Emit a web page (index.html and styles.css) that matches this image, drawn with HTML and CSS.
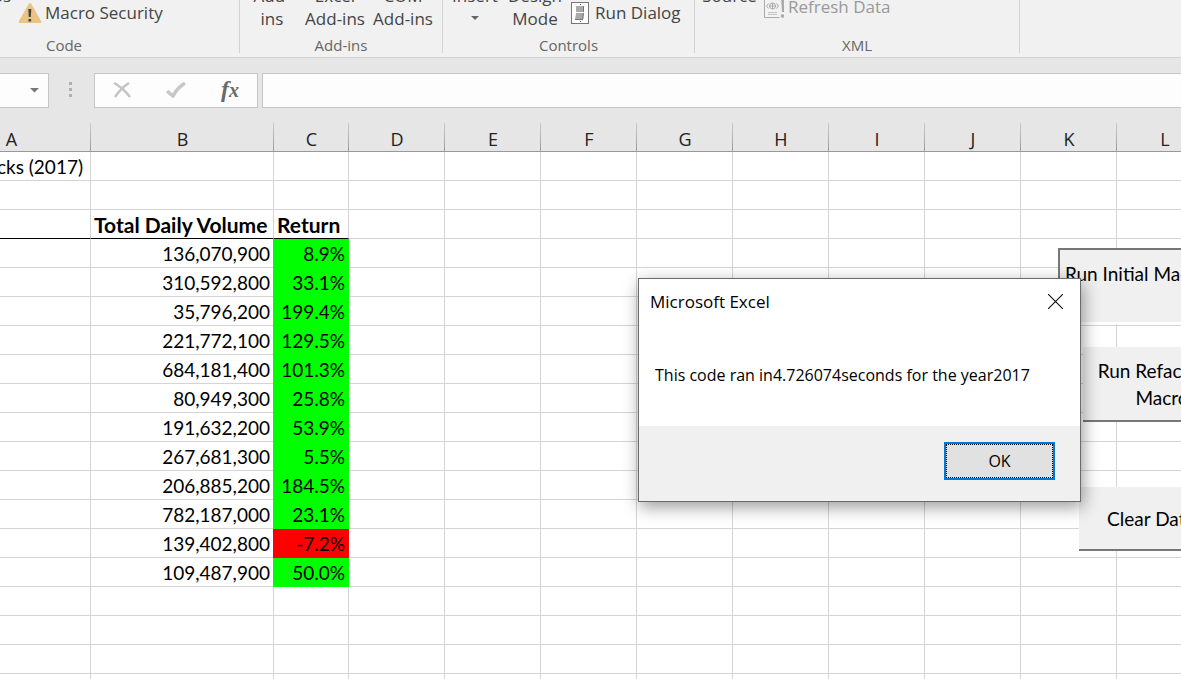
FILE: index.html
```html
<!DOCTYPE html>
<html lang="en">
<head>
<meta charset="utf-8">
<title>Microsoft Excel</title>
<link rel="stylesheet" href="styles.css">
</head>
<body>
<div class="app">
  <div class="ribbon">
    <section class="group group-code">
      <div class="tools">
        <button class="big macros"><span>Macros</span><span class="blank"></span></button>
        <button class="small security">
          <svg width="24" height="22" viewBox="0 0 24 22"><path d="M12 1Q13 1 14 3L23 19Q24 21 22 21H2Q0 21 1 19L10 3Q11 1 12 1Z" fill="#ebc383"/><path d="M10.3 7h3l-.5 8h-2zM10.5 17h2.6v2.4h-2.6z" fill="#444"/></svg>
          <span>Macro Security</span>
        </button>
      </div>
      <div class="caption">Code</div>
    </section>
    <section class="group group-addins">
      <div class="tools">
        <button class="big w-addins"><span>Add-</span><span>ins</span></button>
        <button class="big w-excel"><span>Excel</span><span>Add-ins</span></button>
        <button class="big w-com"><span>COM</span><span>Add-ins</span></button>
      </div>
      <div class="caption">Add-ins</div>
    </section>
    <section class="group group-controls">
      <div class="tools">
        <button class="big w-insert"><span>Insert</span><span class="blank"><svg width="9" height="5" viewBox="0 0 9 5"><path d="M0 0h8L4 4z" fill="#666"/></svg></span></button>
        <button class="big w-design"><span>Design</span><span>Mode</span></button>
        <button class="small dialog-tool">
          <svg width="18" height="22" viewBox="0 0 18 22"><rect x=".5" y=".5" width="17" height="21" fill="#fff" stroke="#777"/><path d="M5 4h8v6H5zM5 11h8l-1 7H4z" fill="#aaa"/><path d="M12 4h1v6h-1zM12 11h1l-1 7h-1zM4 17h8v1H4z" fill="#777"/><path d="M9 2h1v1H9zM9 19h1v1H9z" fill="#555"/></svg>
          <span>Run Dialog</span>
        </button>
      </div>
      <div class="caption">Controls</div>
    </section>
    <section class="group group-xml">
      <div class="tools">
        <button class="big w-source"><span>Source</span><span class="blank"></span></button>
        <button class="small refresh" disabled>
          <svg width="20" height="22" viewBox="0 0 20 22"><path d="M.5 0V21.500H15.500" fill="#f5f3f5" stroke="#aaa"/><path d="M4.500 7.500L2.500 10l2 2.500M12.500 7.500L14.500 10l-2 2.500" fill="none" stroke="#aaa"/><circle cx="8.500" cy="10" r="3" fill="none" stroke="#aaa"/><path d="M5.500 10h6M8.500 7v6" stroke="#aaa"/><path d="M4 16.500h9M4 18.500h9" stroke="#c5bfc5"/><path d="M17 0h4l-1 16h-2z" fill="#aaa"/><circle cx="18.500" cy="20" r="1.800" fill="#aaa"/></svg>
          <span>Refresh Data</span>
        </button>
      </div>
      <div class="caption">XML</div>
    </section>
  </div>

  <div class="formula-bar">
    <button class="name-box" aria-label="Name box"><svg width="9" height="5" viewBox="0 0 9 5"><path d="M0 0h9L4.500 4.500z" fill="#777"/></svg></button>
    <span class="dots"><i></i><i></i><i></i></span>
    <div class="entry-tools">
      <button aria-label="Cancel"><svg width="18" height="16" viewBox="0 0 18 16"><path d="M1 1Q9 5 17 15M16 1Q8 6 2 15" fill="none" stroke="#c4c4c4" stroke-width="2.500"/></svg></button>
      <button aria-label="Enter"><svg width="20" height="16" viewBox="0 0 20 16"><path d="M1 9l6 5Q11 6 19 1" fill="none" stroke="#c8c8c8" stroke-width="3.500"/></svg></button>
      <button class="fx" aria-label="Insert function"><span>f</span><span class="x">x</span></button>
    </div>
    <input class="formula" type="text" aria-label="Formula">
  </div>

  <div class="sheet">
    <table class="grid">
      <colgroup><col class="col-a"><col class="col-b"><col class="col-c"><col class="col"><col class="col"><col class="col"><col class="col"><col class="col"><col class="col"><col class="col"><col class="col"><col></colgroup>
      <thead><tr><th class="head-a">A</th><th>B</th><th>C</th><th>D</th><th>E</th><th>F</th><th>G</th><th>H</th><th>I</th><th>J</th><th>K</th><th>L</th></tr></thead>
      <tbody>
        <tr><td class="title"><div>All Stocks (2017)</div></td><td></td><td></td><td></td><td></td><td></td><td></td><td></td><td></td><td></td><td></td><td></td></tr>
        <tr><td></td><td></td><td></td><td></td><td></td><td></td><td></td><td></td><td></td><td></td><td></td><td></td></tr>
        <tr class="labels"><td class="rule"></td><td class="rule">Total Daily Volume</td><td class="rule">Return</td><td></td><td></td><td></td><td></td><td></td><td></td><td></td><td></td><td></td></tr>
        <tr><td></td><td>136,070,900</td><td class="up">8.9%</td><td></td><td></td><td></td><td></td><td></td><td></td><td></td><td></td><td></td></tr>
        <tr><td></td><td>310,592,800</td><td class="up">33.1%</td><td></td><td></td><td></td><td></td><td></td><td></td><td></td><td></td><td></td></tr>
        <tr><td></td><td>35,796,200</td><td class="up">199.4%</td><td></td><td></td><td></td><td></td><td></td><td></td><td></td><td></td><td></td></tr>
        <tr><td></td><td>221,772,100</td><td class="up">129.5%</td><td></td><td></td><td></td><td></td><td></td><td></td><td></td><td></td><td></td></tr>
        <tr><td></td><td>684,181,400</td><td class="up">101.3%</td><td></td><td></td><td></td><td></td><td></td><td></td><td></td><td></td><td></td></tr>
        <tr><td></td><td>80,949,300</td><td class="up">25.8%</td><td></td><td></td><td></td><td></td><td></td><td></td><td></td><td></td><td></td></tr>
        <tr><td></td><td>191,632,200</td><td class="up">53.9%</td><td></td><td></td><td></td><td></td><td></td><td></td><td></td><td></td><td></td></tr>
        <tr><td></td><td>267,681,300</td><td class="up">5.5%</td><td></td><td></td><td></td><td></td><td></td><td></td><td></td><td></td><td></td></tr>
        <tr><td></td><td>206,885,200</td><td class="up">184.5%</td><td></td><td></td><td></td><td></td><td></td><td></td><td></td><td></td><td></td></tr>
        <tr><td></td><td>782,187,000</td><td class="up">23.1%</td><td></td><td></td><td></td><td></td><td></td><td></td><td></td><td></td><td></td></tr>
        <tr><td></td><td>139,402,800</td><td class="down">-7.2%</td><td></td><td></td><td></td><td></td><td></td><td></td><td></td><td></td><td></td></tr>
        <tr><td></td><td>109,487,900</td><td class="up">50.0%</td><td></td><td></td><td></td><td></td><td></td><td></td><td></td><td></td><td></td></tr>
        <tr><td></td><td></td><td></td><td></td><td></td><td></td><td></td><td></td><td></td><td></td><td></td><td></td></tr>
        <tr><td></td><td></td><td></td><td></td><td></td><td></td><td></td><td></td><td></td><td></td><td></td><td></td></tr>
        <tr><td></td><td></td><td></td><td></td><td></td><td></td><td></td><td></td><td></td><td></td><td></td><td></td></tr>
        <tr><td></td><td></td><td></td><td></td><td></td><td></td><td></td><td></td><td></td><td></td><td></td><td></td></tr>
      </tbody>
    </table>
    <button class="macro macro-initial">Run Initial Macro</button>
    <button class="macro macro-refactored">Run Refactored Macro</button>
    <button class="macro macro-clear">Clear Data</button>
  </div>

  <div class="msgbox" role="dialog" aria-labelledby="msg-title">
    <div class="msg-head">
      <span id="msg-title">Microsoft Excel</span>
      <button class="close" aria-label="Close"><svg width="15" height="15" viewBox="0 0 15 15"><path d="M0 0L15 15M15 0L0 15" stroke="#111" stroke-width="1.100"/></svg></button>
    </div>
    <p class="msg-text">This code ran in4.726074seconds for the year2017</p>
    <div class="msg-foot"><button class="ok">OK</button></div>
  </div>
</div>
</body>
</html>
```
FILE: styles.css
```css
* { box-sizing: border-box; }
body { margin: 0; font-family: "Open Sans", "Noto Sans", sans-serif; font-size: 16px; color: #000; }
button { font: inherit; color: inherit; background: none; border: 0; padding: 0; margin: 0; white-space: nowrap; }
svg { display: block; flex: none; }
.app { position: relative; display: flex; flex-direction: column; height: 100vh; overflow: hidden; background: #fff; }

.ribbon { display: flex; flex: none; height: 58px; overflow: hidden; background: #f1f1f1; border-bottom: 1px solid #d2d2d2; padding-bottom: 4px; color: #444; font-size: 17px; }
.group { display: flex; flex-direction: column; justify-content: flex-end; flex: none; border-right: 1px solid #d2d2d2; }
.group-code { width: 240px; padding-right: 111px; }
.group-addins { width: 203px; }
.group-controls { width: 252px; }
.group-xml { width: 325px; }
.tools { display: flex; align-items: flex-end; padding-bottom: 5px; }
.caption { text-align: center; font-size: 15px; line-height: 20px; color: #666; margin-bottom: -2px; }
.big { display: flex; flex-direction: column; align-items: center; flex: none; line-height: 23px; }
.blank { display: flex; align-items: center; height: 23px; }
.small { display: flex; align-items: center; flex: none; line-height: 22px; margin-bottom: 6px; }
.macros { width: 11px; align-items: flex-end; }
.security { gap: 3px; margin-left: 7px; }
.w-addins, .w-insert { width: 64px; }
.w-excel { width: 62px; }
.w-com { width: 74px; }
.w-design { width: 56px; }
.dialog-tool { gap: 6px; margin-left: 8px; }
.w-source { width: 69px; }
.refresh { gap: 4px; margin-bottom: 12px; color: #999; }

.formula-bar { display: flex; align-items: flex-start; flex: none; height: 65px; padding-top: 15px; background: #e6e6e6; }
.name-box { display: flex; align-items: center; justify-content: flex-end; width: 49px; height: 35px; padding-right: 9px; background: #fdfdfd; border: 1px solid #c6c6c6; border-left: 0; }
.dots { display: flex; flex-direction: column; align-items: center; justify-content: center; gap: 3px; width: 45px; height: 33px; padding-right: 2px; }
.dots i { width: 3px; height: 3px; background: #b0b0b0; }
.entry-tools { display: flex; align-items: center; justify-content: space-between; width: 164px; height: 35px; padding: 0 18px 2px; background: #fdfdfd; border: 1px solid #c6c6c6; }
.fx { display: flex; align-items: baseline; font: italic bold 24px/30px "Liberation Serif", serif; color: #6a6a6a; }
.fx .x { font-size: 20px; }
.formula { flex: 1; min-width: 0; height: 35px; margin-left: 4px; background: #fdfdfd; border: 1px solid #c6c6c6; border-right: 0; padding: 0 8px; font: inherit; }

.sheet { position: relative; flex: 1; min-height: 0; overflow: hidden; font-family: Lato, sans-serif; font-size: 19px; }
.grid { width: 100%; min-width: 1213px; table-layout: fixed; border-collapse: separate; border-spacing: 0; }
.col-a { width: 91px; }
.col-b { width: 183px; }
.col-c { width: 75px; }
.col { width: 96px; }
th { height: 29px; padding: 3px 0 0; font-family: "Open Sans", sans-serif; font-weight: 400; font-size: 18px; line-height: 24px; color: #222; background: linear-gradient(#ccc, #999) right / 1px 100% no-repeat #e6e6e6; border-bottom: 1px solid #999; }
.head-a { padding-right: 68px; }
td { height: 29px; padding: 2px 3px 0; line-height: 26px; text-align: right; white-space: nowrap; border-right: 1px solid #d4d4d4; border-bottom: 1px solid #d4d4d4; }
.title { padding: 2px 7px 0 0; }
.title div { display: flex; justify-content: flex-end; height: 26px; overflow: hidden; }
.labels td { font-size: 21px; font-weight: 700; text-align: left; }
td.rule { border-bottom-color: #000; }
.up { background: #0f0; border-color: #0f0; box-shadow: -1px 0 #0f0; }
.down { background: #f00; border-color: #f00; box-shadow: -1px 0 #f00; }

.macro { position: absolute; background: #f0f0f0; line-height: 27px; border-bottom: 2px solid #777; }
.macro-initial { left: 1058px; top: 125px; width: 166px; height: 76px; padding: 0 5px 26px; text-align: left; border: 2px solid #fff; border-top-color: #777; border-left-color: #777; }
.macro-refactored { left: 1083px; top: 224px; width: 158px; height: 75px; padding: 0 8px; white-space: normal; }
.macro-clear { left: 1079px; top: 364px; width: 144px; height: 64px; }

.msgbox { position: absolute; left: 638px; top: 278px; width: 443px; background: #fff; border: 1px solid #6b6b6b; box-shadow: 2px 5px 16px rgba(0, 0, 0, .4); }
.msg-head { display: flex; align-items: center; justify-content: space-between; height: 44px; padding: 0 17px 0 11px; font-size: 17px; }
.msg-text { margin: 0; padding: 40px 16px 39px; line-height: 24px; white-space: nowrap; }
.msg-foot { display: flex; justify-content: flex-end; padding: 16px 25px 21px; background: #f0f0f0; }
.ok { width: 111px; height: 38px; background: #e1e1e1; border: 2px solid #0078d7; outline: 1px dotted #000; outline-offset: -3px; }
```
